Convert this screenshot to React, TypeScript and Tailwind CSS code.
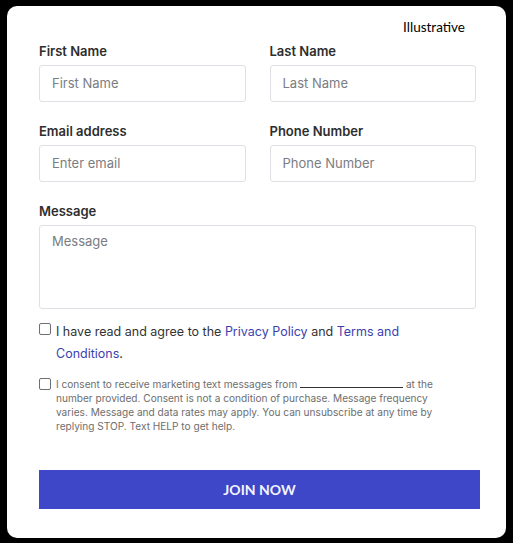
import React from "react";

const inter = { fontFamily: "Inter, 'Noto Sans', sans-serif" };

function Field({ label, placeholder }: { label: string; placeholder: string }) {
  return (
    <div className="flex flex-col">
      <div className="text-[13px] leading-[16px] font-semibold text-[#2e2e2e] mb-[6px]">{label}</div>
      <div className="h-[37px] border border-[#dde0e4] rounded-[3px] flex items-center pl-[12px] pt-[1px] text-[13px] text-[#7a7d82]">
        {placeholder}
      </div>
    </div>
  );
}

function Box() {
  return <div className="w-[12px] h-[12px] border border-[#6f6f6f] rounded-[2px] bg-white shrink-0" />;
}

export default function App() {
  return (
    <div className="w-[513px] h-[543px] bg-black pt-[6px] pl-[7px] pr-[7px] pb-[5px]" style={inter}>
      <div className="relative h-full bg-white rounded-[10px] pt-[37px] pl-[32px] pr-[26px]">
        <div
          className="absolute top-[12px] right-[41px] text-[13.5px] leading-[18px] text-black"
          style={{ fontFamily: "Lato, 'Open Sans', sans-serif" }}
        >
          Illustrative
        </div>
        <div className="pr-[4px]">
          <div className="grid grid-cols-2 gap-x-[24px] gap-y-[21px]">
            <Field label="First Name" placeholder="First Name" />
            <Field label="Last Name" placeholder="Last Name" />
            <Field label="Email address" placeholder="Enter email" />
            <Field label="Phone Number" placeholder="Phone Number" />
          </div>
          <div className="mt-[21px]">
            <div className="text-[13px] leading-[16px] font-semibold text-[#2e2e2e] mb-[6px]">Message</div>
            <div className="h-[84px] border border-[#dde0e4] rounded-[3px] pl-[12px] pt-[6px] text-[13px] text-[#7a7d82]">
              Message
            </div>
          </div>
        </div>
        <div className="mt-[12px] flex gap-[5px]">
          <div className="pt-[2px]">
            <Box />
          </div>
          <div className="text-[12.5px] leading-[22px] text-[#333]">
            I have read and agree to the <span className="text-[#3b3fae]">Privacy Policy</span> and{" "}
            <span className="text-[#3b3fae]">Terms and</span>
            <br />
            <span className="text-[#3b3fae]">Conditions</span>.
          </div>
        </div>
        <div className="mt-[12px] flex gap-[5px]">
          <div className="pt-[1px]">
            <Box />
          </div>
          <div className="text-[10.1px] leading-[14px] text-[#6e6e6e]">
            I consent to receive marketing text messages from{" "}
            <span className="inline-block w-[103px] border-b border-[#333] align-baseline" /> at the
            <br />
            number provided. Consent is not a condition of purchase. Message frequency
            <br />
            varies. Message and data rates may apply. You can unsubscribe at any time by
            <br />
            replying STOP. Text HELP to get help.
          </div>
        </div>
        <div
          className="mt-[37px] h-[39px] bg-[#3f47c9] flex items-center justify-center text-[#f4f4ff] text-[14px] font-bold"
          style={{ fontFamily: "Lato, 'Open Sans', sans-serif" }}
        >
          JOIN NOW
        </div>
      </div>
    </div>
  );
}
